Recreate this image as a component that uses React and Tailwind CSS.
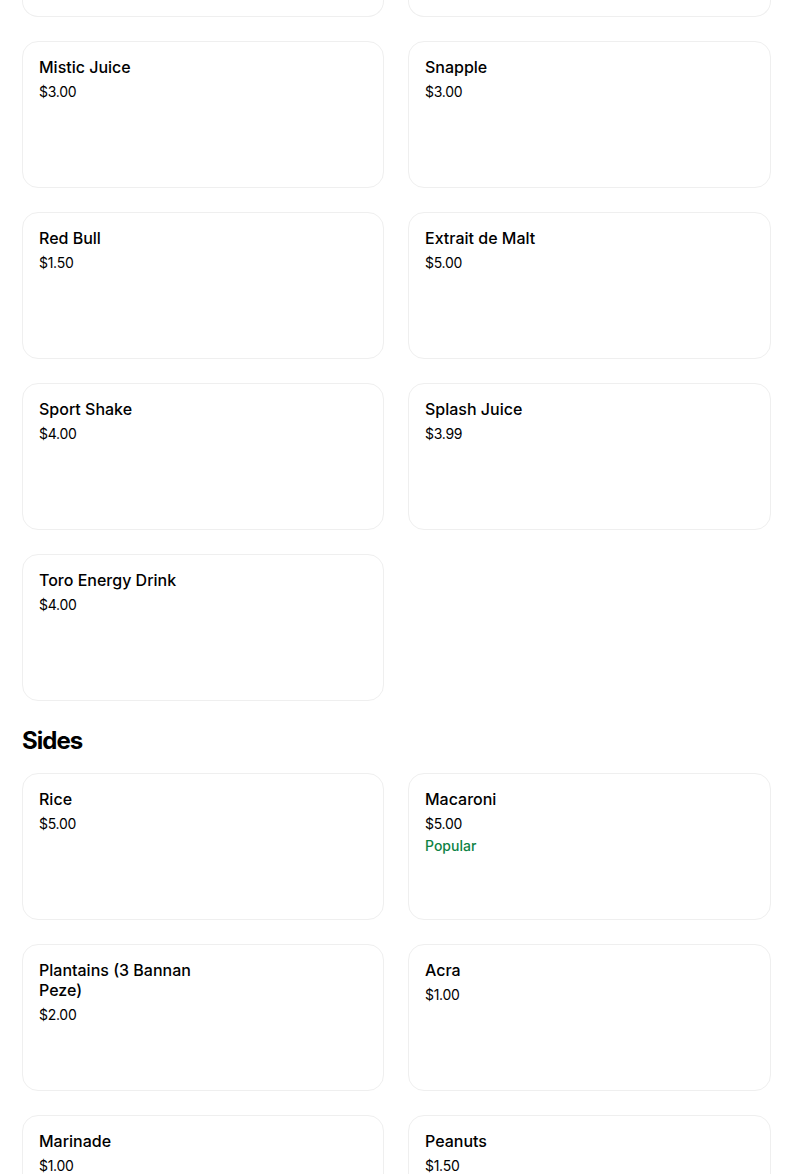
const drinks = [
  { name: "Mistic Juice", price: "$3.00" },
  { name: "Snapple", price: "$3.00" },
  { name: "Red Bull", price: "$1.50" },
  { name: "Extrait de Malt", price: "$5.00" },
  { name: "Sport Shake", price: "$4.00" },
  { name: "Splash Juice", price: "$3.99" },
  { name: "Toro Energy Drink", price: "$4.00" },
];

const sides = [
  { name: "Rice", price: "$5.00" },
  { name: "Macaroni", price: "$5.00", popular: true },
  { name: "Plantains (3 Bannan Peze)", price: "$2.00" },
  { name: "Acra", price: "$1.00" },
  { name: "Marinade", price: "$1.00" },
  { name: "Peanuts", price: "$1.50" },
];

function ItemCard({ item }) {
  return (
    <div className="h-[147px] rounded-2xl border border-[#efefef] bg-white px-4 pt-[15px]">
      <div className="w-[172px]">
        <div className="text-[16px] leading-5 font-medium text-black">{item.name}</div>
        <div className="mt-[5px] text-[14px] leading-5 tracking-[-0.02em] text-black">{item.price}</div>
        {item.popular && (
          <div className="mt-[2px] text-[14px] leading-5 font-medium text-[#0e8345]">Popular</div>
        )}
      </div>
    </div>
  );
}

export default function App() {
  return (
    <div className="h-[1174px] overflow-hidden bg-white" style={{ fontFamily: "Inter, 'Noto Sans', sans-serif" }}>
      <div className="ml-[22px] w-[749px]">
        <div className="grid grid-cols-[362px_363px] gap-6">
          {/* bottom edges of the row scrolled above */}
          <div className="h-[17px] rounded-b-2xl border border-t-0 border-[#efefef]" />
          <div className="h-[17px] rounded-b-2xl border border-t-0 border-[#efefef]" />
          {drinks.map((d) => (
            <ItemCard key={d.name} item={d} />
          ))}
        </div>
        <h2 className="mt-6 mb-4 text-[24px] leading-8 font-bold tracking-[-0.04em] text-black">Sides</h2>
        <div className="grid grid-cols-[362px_363px] gap-6">
          {sides.map((d) => (
            <ItemCard key={d.name} item={d} />
          ))}
        </div>
      </div>
    </div>
  );
}
